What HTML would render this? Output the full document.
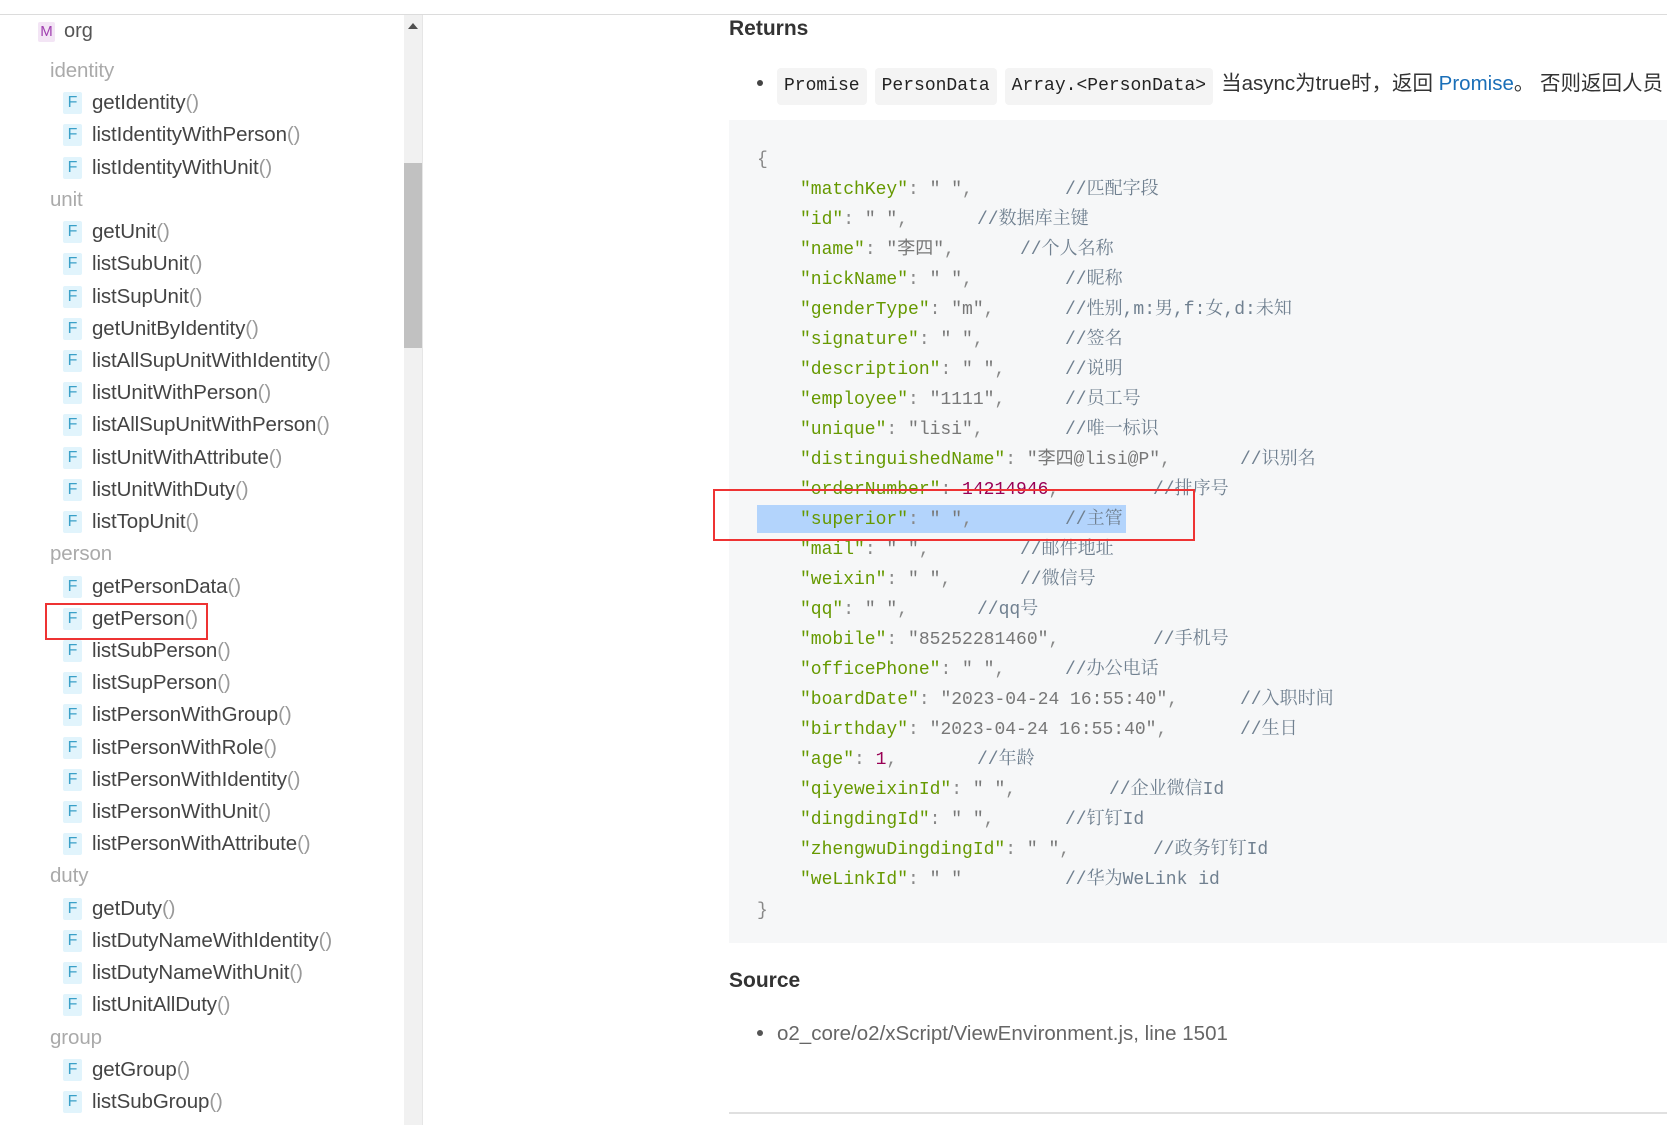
<!DOCTYPE html>
<html><head><meta charset="utf-8">
<style>
*{margin:0;padding:0;box-sizing:border-box}
body{width:1667px;height:1125px;overflow:hidden;background:#fff;position:relative;font-family:"Liberation Sans","Noto Sans CJK SC",sans-serif;color:#333}
.topline{position:absolute;left:0;top:14px;width:1667px;height:1px;background:#dcdcdc}
.side{position:absolute;left:0;top:15px;width:423px;height:1110px;border-right:1px solid #e6e6e6}
.sb{position:absolute;left:404px;top:15px;width:18px;height:1110px;background:#f1f1f1}
.thumb{position:absolute;left:404px;top:163px;width:18px;height:185px;background:#c1c1c1}
.arr{position:absolute;left:408px;top:23px;width:0;height:0;border-left:5px solid transparent;border-right:5px solid transparent;border-bottom:6px solid #505050}
.org{position:absolute;left:38px;top:19px;font-size:20px;color:#555;line-height:24px}
.m{display:inline-block;width:17px;height:20px;background:#f3e5f5;color:#a040b0;font-size:15px;text-align:center;line-height:20px;border-radius:2px;margin-right:9px;vertical-align:1px}
.list{position:absolute;left:0;top:55px;width:400px}
.r{height:32.23px;line-height:32.23px;font-size:20.5px;white-space:nowrap;letter-spacing:-0.1px}
.sec{padding-left:50px;color:#aaa}
.it{padding-left:63px;color:#444}
.f{display:inline-block;width:19px;height:22px;background:#e1f4fc;color:#3aa0c8;font-size:16px;text-align:center;line-height:22px;border-radius:2px;margin-right:10px;vertical-align:2px}
.p{color:#999}
.rb1{position:absolute;left:45px;top:603px;width:163px;height:37px;border:2px solid #ee3333}
.h{position:absolute;left:729px;font-weight:bold;font-size:21px;color:#333;font-family:"Liberation Sans Narrow","Liberation Sans",sans-serif}
.bul{position:absolute;left:757px;font-size:20.5px;white-space:nowrap}
.dot{display:inline-block;width:6px;height:6px;background:#444;border-radius:50%;vertical-align:4px;margin-right:14px}
.chip{display:inline-block;background:#f4f4f4;border-radius:4px;padding:0 7px;height:37px;line-height:37px;font-family:"Liberation Mono",monospace;font-size:18px;color:#222;margin-right:8px}
.code{position:absolute;left:729px;top:120px;width:938px;height:823px;background:#f6f7f8}
.ln{position:absolute;height:30px;line-height:30px;font-family:"Liberation Mono","Noto Sans CJK SC",monospace;font-size:18px;white-space:pre;color:#888}
.k{color:#669900}
.s{color:#777}
.n{color:#990055}
.c{position:absolute;top:0;color:#708090;font-family:"Liberation Mono","Noto Serif CJK SC",monospace}
.sel{position:absolute;left:757px;top:505px;width:369px;height:28px;background:#b3d4fc}
.rb2{position:absolute;left:713px;top:489px;width:482px;height:52px;border:2px solid #ee3333}
.hr{position:absolute;left:729px;top:1112px;width:938px;height:2px;background:#e0e0e0}
</style></head><body>
<div class="topline"></div>
<div class="side"></div>
<div class="sb"></div><div class="thumb"></div><div class="arr"></div>
<div class="org"><span class="m">M</span>org</div>
<div class="list">
<div class="r sec">identity</div>
<div class="r it"><span class="f">F</span>getIdentity<span class="p">()</span></div>
<div class="r it"><span class="f">F</span>listIdentityWithPerson<span class="p">()</span></div>
<div class="r it"><span class="f">F</span>listIdentityWithUnit<span class="p">()</span></div>
<div class="r sec">unit</div>
<div class="r it"><span class="f">F</span>getUnit<span class="p">()</span></div>
<div class="r it"><span class="f">F</span>listSubUnit<span class="p">()</span></div>
<div class="r it"><span class="f">F</span>listSupUnit<span class="p">()</span></div>
<div class="r it"><span class="f">F</span>getUnitByIdentity<span class="p">()</span></div>
<div class="r it"><span class="f">F</span>listAllSupUnitWithIdentity<span class="p">()</span></div>
<div class="r it"><span class="f">F</span>listUnitWithPerson<span class="p">()</span></div>
<div class="r it"><span class="f">F</span>listAllSupUnitWithPerson<span class="p">()</span></div>
<div class="r it"><span class="f">F</span>listUnitWithAttribute<span class="p">()</span></div>
<div class="r it"><span class="f">F</span>listUnitWithDuty<span class="p">()</span></div>
<div class="r it"><span class="f">F</span>listTopUnit<span class="p">()</span></div>
<div class="r sec">person</div>
<div class="r it"><span class="f">F</span>getPersonData<span class="p">()</span></div>
<div class="r it"><span class="f">F</span>getPerson<span class="p">()</span></div>
<div class="r it"><span class="f">F</span>listSubPerson<span class="p">()</span></div>
<div class="r it"><span class="f">F</span>listSupPerson<span class="p">()</span></div>
<div class="r it"><span class="f">F</span>listPersonWithGroup<span class="p">()</span></div>
<div class="r it"><span class="f">F</span>listPersonWithRole<span class="p">()</span></div>
<div class="r it"><span class="f">F</span>listPersonWithIdentity<span class="p">()</span></div>
<div class="r it"><span class="f">F</span>listPersonWithUnit<span class="p">()</span></div>
<div class="r it"><span class="f">F</span>listPersonWithAttribute<span class="p">()</span></div>
<div class="r sec">duty</div>
<div class="r it"><span class="f">F</span>getDuty<span class="p">()</span></div>
<div class="r it"><span class="f">F</span>listDutyNameWithIdentity<span class="p">()</span></div>
<div class="r it"><span class="f">F</span>listDutyNameWithUnit<span class="p">()</span></div>
<div class="r it"><span class="f">F</span>listUnitAllDuty<span class="p">()</span></div>
<div class="r sec">group</div>
<div class="r it"><span class="f">F</span>getGroup<span class="p">()</span></div>
<div class="r it"><span class="f">F</span>listSubGroup<span class="p">()</span></div>
</div>
<div class="rb1"></div>

<div class="h" style="top:17px">Returns</div>
<div class="bul" style="top:65px;line-height:37px"><span class="dot"></span><span class="chip">Promise</span><span class="chip">PersonData</span><span class="chip">Array.&lt;PersonData&gt;</span><span style="color:#333">当async为true时，返回 <span style="color:#1a6fb8">Promise</span>。 否则返回人员</span></div>

<div class="code"></div>
<div class="sel"></div>
<div class="ln" style="left:757px;top:145px">{</div>
<div class="ln" style="left:800px;top:175px;width:800px"><span class="k">"matchKey"</span>: <span class="s">" "</span>,<span class="c" style="left:265px">//匹配字段</span></div>
<div class="ln" style="left:800px;top:205px;width:800px"><span class="k">"id"</span>: <span class="s">" "</span>,<span class="c" style="left:177px">//数据库主键</span></div>
<div class="ln" style="left:800px;top:235px;width:800px"><span class="k">"name"</span>: <span class="s">"李四"</span>,<span class="c" style="left:220px">//个人名称</span></div>
<div class="ln" style="left:800px;top:265px;width:800px"><span class="k">"nickName"</span>: <span class="s">" "</span>,<span class="c" style="left:265px">//昵称</span></div>
<div class="ln" style="left:800px;top:295px;width:800px"><span class="k">"genderType"</span>: <span class="s">"m"</span>,<span class="c" style="left:265px">//性别,m:男,f:女,d:未知</span></div>
<div class="ln" style="left:800px;top:325px;width:800px"><span class="k">"signature"</span>: <span class="s">" "</span>,<span class="c" style="left:265px">//签名</span></div>
<div class="ln" style="left:800px;top:355px;width:800px"><span class="k">"description"</span>: <span class="s">" "</span>,<span class="c" style="left:265px">//说明</span></div>
<div class="ln" style="left:800px;top:385px;width:800px"><span class="k">"employee"</span>: <span class="s">"1111"</span>,<span class="c" style="left:265px">//员工号</span></div>
<div class="ln" style="left:800px;top:415px;width:800px"><span class="k">"unique"</span>: <span class="s">"lisi"</span>,<span class="c" style="left:265px">//唯一标识</span></div>
<div class="ln" style="left:800px;top:445px;width:800px"><span class="k">"distinguishedName"</span>: <span class="s">"李四@lisi@P"</span>,<span class="c" style="left:440px">//识别名</span></div>
<div class="ln" style="left:800px;top:475px;width:800px"><span class="k">"orderNumber"</span>: <span class="n">14214946</span>,<span class="c" style="left:353px">//排序号</span></div>
<div class="ln" style="left:800px;top:505px;width:800px"><span class="k">"superior"</span>: <span class="s">" "</span>,<span class="c" style="left:265px">//主管</span></div>
<div class="ln" style="left:800px;top:535px;width:800px"><span class="k">"mail"</span>: <span class="s">" "</span>,<span class="c" style="left:220px">//邮件地址</span></div>
<div class="ln" style="left:800px;top:565px;width:800px"><span class="k">"weixin"</span>: <span class="s">" "</span>,<span class="c" style="left:220px">//微信号</span></div>
<div class="ln" style="left:800px;top:595px;width:800px"><span class="k">"qq"</span>: <span class="s">" "</span>,<span class="c" style="left:177px">//qq号</span></div>
<div class="ln" style="left:800px;top:625px;width:800px"><span class="k">"mobile"</span>: <span class="s">"85252281460"</span>,<span class="c" style="left:353px">//手机号</span></div>
<div class="ln" style="left:800px;top:655px;width:800px"><span class="k">"officePhone"</span>: <span class="s">" "</span>,<span class="c" style="left:265px">//办公电话</span></div>
<div class="ln" style="left:800px;top:685px;width:800px"><span class="k">"boardDate"</span>: <span class="s">"2023-04-24 16:55:40"</span>,<span class="c" style="left:440px">//入职时间</span></div>
<div class="ln" style="left:800px;top:715px;width:800px"><span class="k">"birthday"</span>: <span class="s">"2023-04-24 16:55:40"</span>,<span class="c" style="left:440px">//生日</span></div>
<div class="ln" style="left:800px;top:745px;width:800px"><span class="k">"age"</span>: <span class="n">1</span>,<span class="c" style="left:177px">//年龄</span></div>
<div class="ln" style="left:800px;top:775px;width:800px"><span class="k">"qiyeweixinId"</span>: <span class="s">" "</span>,<span class="c" style="left:309px">//企业微信Id</span></div>
<div class="ln" style="left:800px;top:805px;width:800px"><span class="k">"dingdingId"</span>: <span class="s">" "</span>,<span class="c" style="left:265px">//钉钉Id</span></div>
<div class="ln" style="left:800px;top:835px;width:800px"><span class="k">"zhengwuDingdingId"</span>: <span class="s">" "</span>,<span class="c" style="left:353px">//政务钉钉Id</span></div>
<div class="ln" style="left:800px;top:865px;width:800px"><span class="k">"weLinkId"</span>: <span class="s">" "</span><span class="c" style="left:265px">//华为WeLink id</span></div>
<div class="ln" style="left:757px;top:896px">}</div>
<div class="rb2"></div>

<div class="h" style="top:969px">Source</div>
<div class="bul" style="top:1021px;line-height:26px;color:#666"><span class="dot" style="background:#555"></span>o2_core/o2/xScript/ViewEnvironment.js, line 1501</div>
<div class="hr"></div>
</body></html>
